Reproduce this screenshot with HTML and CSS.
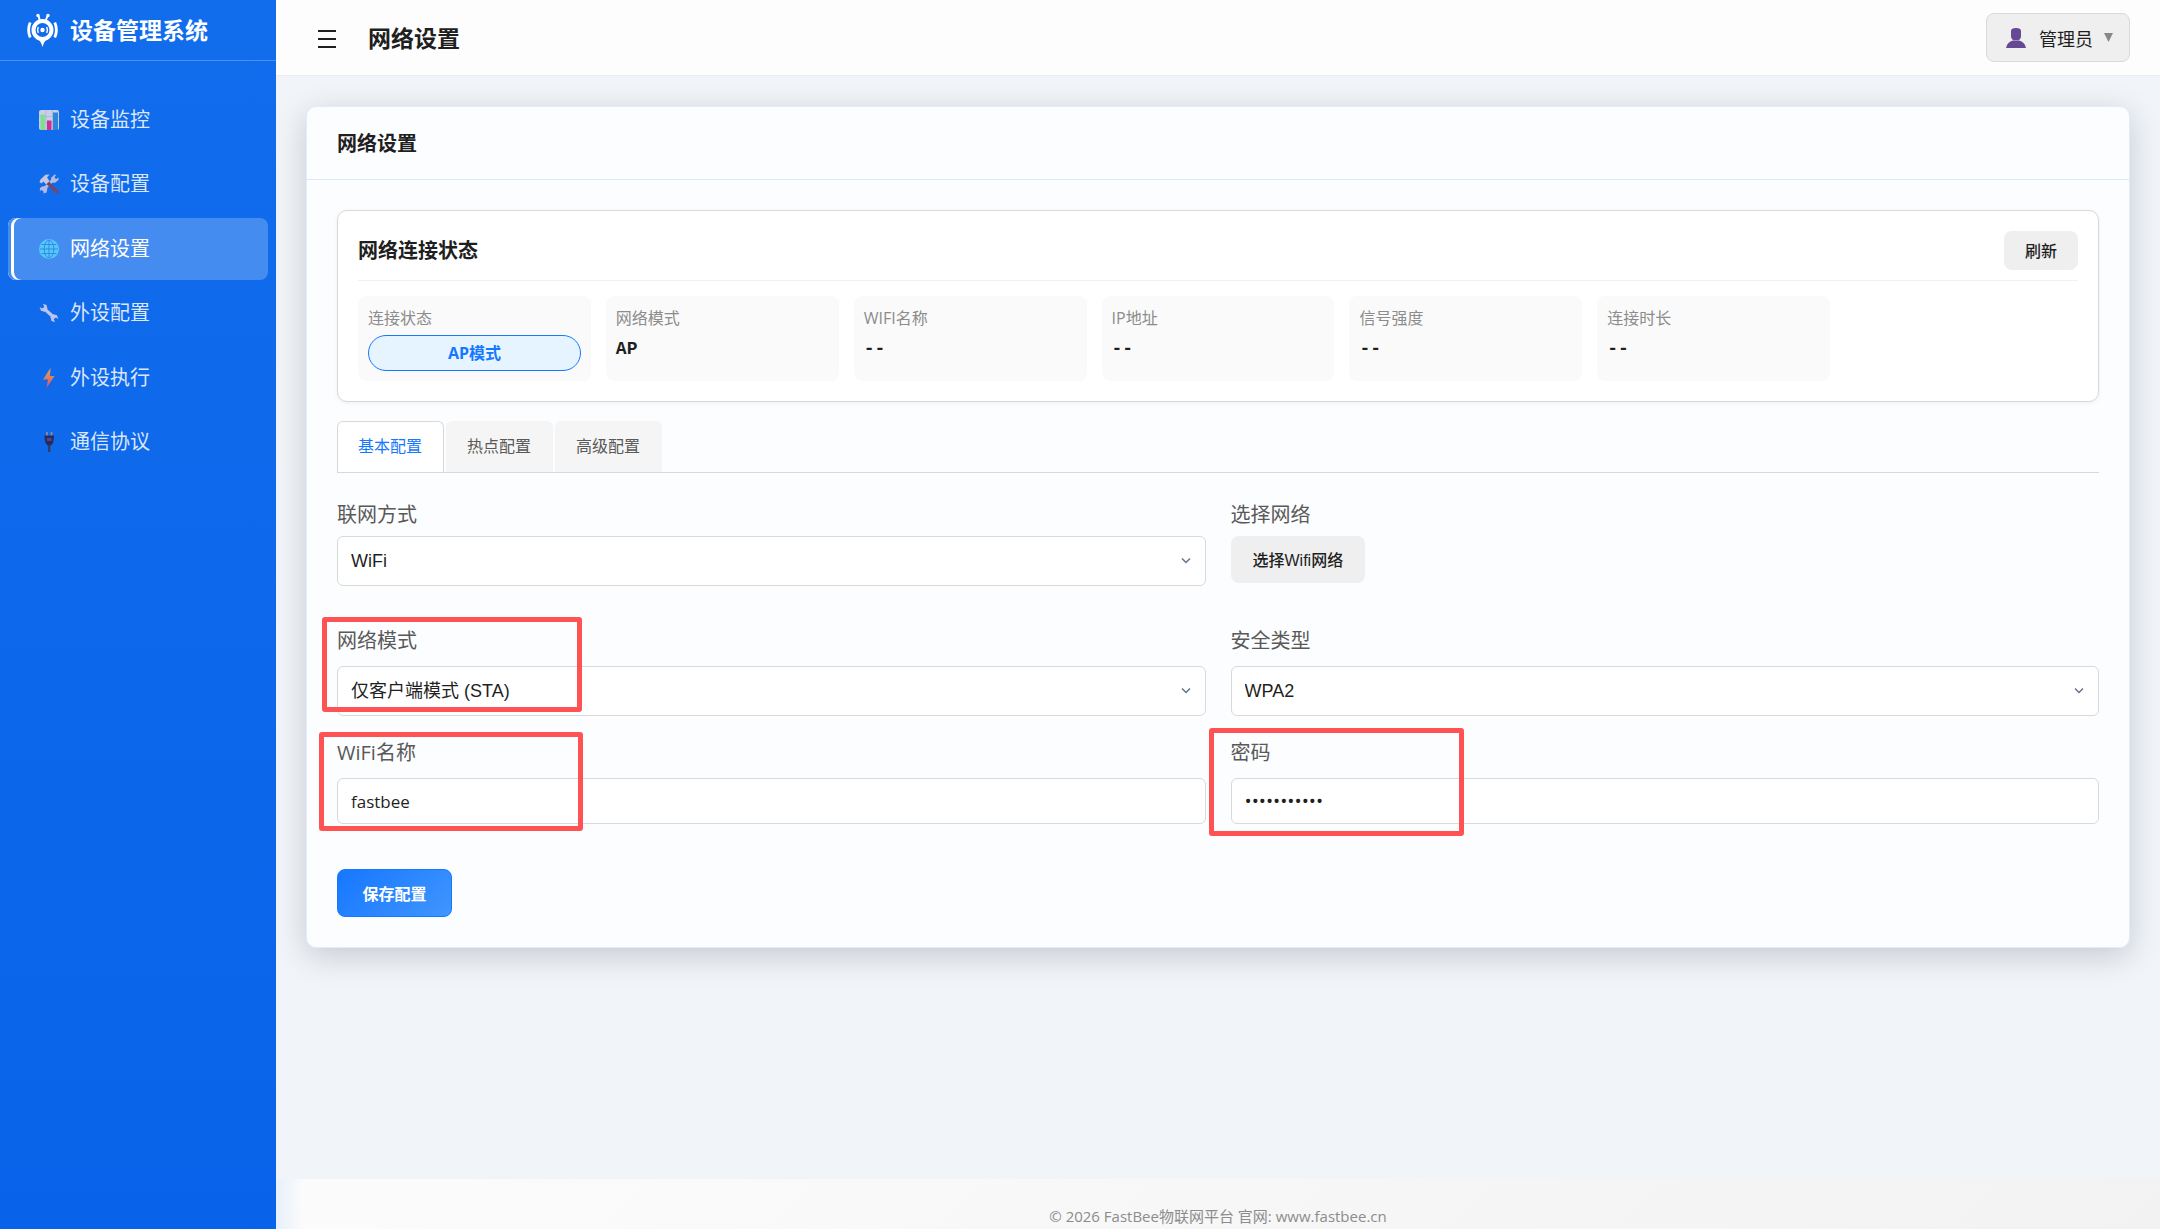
FILE: index.html
```html
<!DOCTYPE html>
<html lang="zh-CN">
<head>
<meta charset="utf-8">
<title>设备管理系统</title>
<link rel="stylesheet" href="styles.css">
</head>
<body>
<aside class="sidebar">
  <div class="brand">
    <svg class="brand-logo" viewBox="0 0 32 34" fill="none" stroke="#fff" stroke-width="2">
      <path d="M13 8L11.500 3M18.500 8L20.500 3"/>
      <circle cx="11" cy="2.500" r="1.700" fill="#fff" stroke="none"/>
      <circle cx="21" cy="2.500" r="1.700" fill="#fff" stroke="none"/>
      <path d="M9 24Q14 28 15.500 34Q17 28 22 24Z" fill="#fff" stroke="none"/>
      <circle cx="15.500" cy="17" r="9" stroke-width="4"/>
      <circle cx="15.500" cy="17" r="2.200" fill="#fff" stroke="none"/>
      <path d="M11.300 14q-1.500 3 0 6M19.700 14q1.500 3 0 6" stroke-width="1.500"/>
      <path d="M3.200 9.500q-3.200 7.500 0 15M27.800 9.500q3.200 7.500 0 15" stroke-width="2.800"/>
    </svg>
    <span class="brand-name">设备管理系统</span>
  </div>
  <nav class="menu">
    <a class="menu-item" href="#monitor">
      <svg class="menu-icon" viewBox="0 0 20 20"><rect width="20" height="20" rx="2" fill="#c9cfe8"/><path d="M0 6.500h20M0 13h20M7 0v20M13.500 0v20" stroke="#9aa9d2" stroke-width=".6"/><rect x="1.500" y="4.500" width="4.500" height="15.500" fill="#7de08c"/><rect x="8" y="10.500" width="4.500" height="9.500" fill="#cf3090"/><rect x="14" y="2.500" width="5" height="17.500" fill="#2f84dc"/></svg>
      <span>设备监控</span>
    </a>
    <a class="menu-item" href="#device">
      <svg class="menu-icon" viewBox="0 0 20 20"><path d="M3.500 16.500L14 6" stroke="#b3bbe2" stroke-width="3"/><path d="M12.500 8.500L12 4 15.500.5 17 1 15.500 3.500 17 5 19.500 3.500 19.500 6 16 8.800z" fill="#b3bbe2"/><path d="M6.500 12L8.500 14 7.500 18.500 4.500 19.500 4.500 17 2.500 16 .8 17 1 14 3 12.500z" fill="#b3bbe2"/><path d="M9 9l9 9" stroke="#73496b" stroke-width="3.600" stroke-linecap="round"/><path d="M.5 8L1.500 5.500 6.500.8 10.500.5 8 3.500 10.500 7 7 10.500 4.500 7.500 2.500 9.500z" fill="#c3c7e4"/></svg>
      <span>设备配置</span>
    </a>
    <a class="menu-item menu-item-active" href="#network" aria-current="page">
      <svg class="menu-icon" viewBox="0 0 20 20"><circle cx="10" cy="10" r="10" fill="#55c8fb"/><g fill="none" stroke="#2f86e0" stroke-width=".9"><ellipse cx="10" cy="10" rx="4.800" ry="9"/><path d="M10 1v18M1 10h18M2.500 5.500h15M2.500 14.500h15"/></g></svg>
      <span>网络设置</span>
    </a>
    <a class="menu-item" href="#peripheral">
      <svg class="menu-icon" viewBox="0 0 20 20"><path d="M5 5.500L15 14.500" stroke="#bfc4ec" stroke-width="3.200"/><path d="M4 .8L7.500 2 8.500 6 5.500 8.800 2 7.800.6 4 3 5.500 5.300 4z" fill="#bfc4ec"/><path d="M16 19L12.500 18 11.500 14 14.500 11.200 18 12.300 19.400 16 17 14.500 14.700 16z" fill="#bfc4ec"/></svg>
      <span>外设配置</span>
    </a>
    <a class="menu-item" href="#execute">
      <svg class="menu-icon" viewBox="0 0 20 20"><defs><linearGradient id="bolt" x2="0" y2="1"><stop stop-color="#dba75a"/><stop offset="1" stop-color="#e4506a"/></linearGradient></defs><path d="M11.500 0L4 11.500h5L7.500 20 15.500 8H11z" fill="url(#bolt)"/></svg>
      <span>外设执行</span>
    </a>
    <a class="menu-item" href="#protocol">
      <svg class="menu-icon" viewBox="0 0 20 20"><path d="M8 0v4M12.500 0v4" stroke="#8d86a0" stroke-width="1.800"/><path d="M5.500 3.500h9.500v2.500l-1 5-2 2.500h-3.500l-2-2.500-1-5z" fill="#2b2c55"/><rect x="8" y="6" width="4.500" height="3" fill="#4a45a0"/><path d="M10.200 13v7" stroke="#333a66" stroke-width="2.400"/></svg>
      <span>通信协议</span>
    </a>
  </nav>
</aside>
<div class="main">
  <header class="topbar">
    <button class="menu-toggle" type="button" aria-label="菜单"><svg width="18" height="18" viewBox="0 0 18 18" stroke="#1f1f1f" stroke-width="2"><path d="M0 1h18M0 9h18M0 17h18"/></svg></button>
    <h1 class="page-title">网络设置</h1>
    <button class="user-button" type="button">
      <svg class="user-icon" viewBox="0 0 20 20" fill="#654994"><path d="M5 3q0-3 5-3t5 3v5q0 3-3 4.500H8Q5 11 5 8z"/><path d="M0 20q1-6 7-7.500l3 .5 3-.5q6 1.500 7 7.500z"/></svg>
      <span>管理员</span>
      <svg class="user-caret" viewBox="0 0 10 10"><path d="M0 0h10L5 10z" fill="#888"/></svg>
    </button>
  </header>
  <main class="content">
    <section class="card">
      <h2 class="card-header">网络设置</h2>
      <div class="card-body">
        <section class="status">
          <div class="status-header">
            <h3 class="status-title">网络连接状态</h3>
            <button class="plain-button refresh" type="button">刷新</button>
          </div>
          <dl class="status-grid">
            <div class="status-item"><dt>连接状态</dt><dd class="badge">AP模式</dd></div>
            <div class="status-item"><dt>网络模式</dt><dd>AP</dd></div>
            <div class="status-item"><dt>WIFI名称</dt><dd>--</dd></div>
            <div class="status-item"><dt>IP地址</dt><dd>--</dd></div>
            <div class="status-item"><dt>信号强度</dt><dd>--</dd></div>
            <div class="status-item"><dt>连接时长</dt><dd>--</dd></div>
          </dl>
        </section>
        <div class="tabs" role="tablist">
          <button class="tab tab-active" type="button" role="tab" aria-selected="true">基本配置</button>
          <button class="tab" type="button" role="tab">热点配置</button>
          <button class="tab" type="button" role="tab">高级配置</button>
        </div>
        <form class="form">
          <div class="form-row form-row-first">
            <div class="field">
              <label for="link">联网方式</label>
              <select id="link" class="control select"><option>WiFi</option></select>
            </div>
            <div class="field">
              <label for="pick">选择网络</label>
              <button id="pick" class="plain-button pick" type="button">选择Wifi网络</button>
            </div>
          </div>
          <div class="form-row">
            <div class="field">
              <label for="mode">网络模式</label>
              <select id="mode" class="control select"><option>仅客户端模式 (STA)</option></select>
              <span class="mark mark-mode"></span>
            </div>
            <div class="field">
              <label for="security">安全类型</label>
              <select id="security" class="control select"><option>WPA2</option></select>
            </div>
          </div>
          <div class="form-row">
            <div class="field">
              <label for="ssid">WiFi名称</label>
              <input id="ssid" class="control input" type="text" value="fastbee">
              <span class="mark mark-ssid"></span>
            </div>
            <div class="field">
              <label for="password">密码</label>
              <input id="password" class="control input input-password" type="password" value="fastbee2026">
              <span class="mark mark-password"></span>
            </div>
          </div>
          <button class="save" type="button">保存配置</button>
        </form>
      </div>
    </section>
  </main>
  <footer class="footer">© 2026 FastBee物联网平台 官网: www.fastbee.cn</footer>
</div>
</body>
</html>
```
FILE: styles.css
```css
* { box-sizing: border-box; }

body {
  margin: 0;
  min-height: 100vh;
  display: flex;
  font-family: "Open Sans", "Noto Sans CJK SC", sans-serif;
  font-size: 16px;
  color: #1f1f1f;
  background: #f1f5fa;
}

h1, h2, h3, dl, dd { margin: 0; }
button, input, select { font: inherit; color: inherit; margin: 0; }

/* Sidebar */
.sidebar {
  flex: none;
  width: 276px;
  background: linear-gradient(180deg, #116dec, #0963ea);
  color: #fff;
}
.brand {
  display: flex;
  align-items: center;
  gap: 11px;
  height: 61px;
  padding: 0 27px;
  border-bottom: 1px solid rgba(255, 255, 255, .25);
}
.brand-logo { width: 32px; height: 34px; }
.brand-name { font-size: 23px; font-weight: 700; line-height: 32px; }
.menu {
  display: flex;
  flex-direction: column;
  justify-content: space-between;
  height: 442px;
  padding: 28px 8px 30px;
}
.menu-item {
  display: flex;
  align-items: center;
  gap: 11px;
  height: 62px;
  padding-left: 31px;
  border-radius: 8px;
  font-size: 20px;
  line-height: 30px;
  color: rgba(255, 255, 255, .85);
  text-decoration: none;
}
.menu-icon { width: 20px; height: 20px; }
.menu-item-active {
  color: #fff;
  background: #448cef;
  box-shadow: inset 3px 0 #448cef, inset 6px 0 #fff;
}

/* Top bar */
.main {
  flex: 1;
  min-width: 0;
  display: flex;
  flex-direction: column;
}
.topbar {
  display: flex;
  align-items: center;
  height: 76px;
  padding: 0 30px 0 42px;
  background: #fdfdfe;
  border-bottom: 1px solid #ececee;
}
.menu-toggle {
  display: flex;
  padding: 2px 0 0;
  border: 0;
  background: none;
}
.page-title {
  flex: 1;
  margin-left: 32px;
  font-size: 23px;
  line-height: 32px;
  font-weight: 700;
}
.user-button {
  display: flex;
  align-items: center;
  height: 49px;
  padding: 0 16px 0 19px;
  border: 1px solid #d9d9d9;
  border-radius: 8px;
  background: #efefef;
  font-size: 18px;
}
.user-icon { width: 20px; height: 20px; margin-right: 13px; }
.user-caret { width: 9px; height: 9px; margin-left: 11px; }

/* Card */
.content { flex: 1; padding: 30px; }
.card {
  border: 1px solid #e0ebfb;
  border-radius: 10px;
  background: #fcfdff;
  box-shadow: 0 8px 32px rgba(0, 0, 0, .18);
}
.card-header {
  padding: 22px 30px 20px;
  font-size: 20px;
  line-height: 30px;
  border-bottom: 1px solid #dce9fd;
}
.card-body { padding: 30px; }

/* Connection status */
.status {
  padding: 20px;
  border: 1px solid #d9d9d9;
  border-radius: 10px;
  background: #fff;
  box-shadow: 0 1px 4px rgba(0, 0, 0, .06);
}
.status-header {
  display: flex;
  align-items: center;
  justify-content: space-between;
  padding-bottom: 10px;
  border-bottom: 1px solid #f0f0f0;
}
.status-title { font-size: 20px; line-height: 30px; }
.plain-button {
  padding: 0 22px 2px;
  border: 0;
  border-radius: 8px;
  background: #efefef;
  font-family: "Liberation Sans", "Noto Sans CJK SC", sans-serif;
  font-weight: 500;
}
.refresh { height: 39px; padding: 0 21px 2px; }
.status-grid {
  display: grid;
  grid-template-columns: repeat(7, 1fr);
  gap: 15px;
  margin-top: 15px;
}
.status-item {
  height: 85px;
  padding: 10px;
  border-radius: 8px;
  background: #fafafa;
}
.status-item dt { line-height: 24px; color: #8c8c8c; margin-bottom: 5px; }
.status-item dd {
  font-family: "Courier New", "Liberation Mono", monospace;
  font-size: 18px;
  font-weight: 700;
  line-height: 28px;
}
.status-item .badge {
  font-family: inherit;
  font-size: 16px;
  line-height: 34px;
  text-align: center;
  color: #1677ff;
  background: #e6f4ff;
  border: 1px solid #1677ff;
  border-radius: 18px;
}

/* Tabs */
.tabs {
  display: flex;
  gap: 2px;
  margin-top: 19px;
  border-bottom: 1px solid #d9d9d9;
}
.tab {
  height: 51px;
  padding: 0 21px 4px 20px;
  border: 1px solid transparent;
  border-bottom: 0;
  border-radius: 6px 6px 0 0;
  background: #f5f5f5;
  color: #595959;
}
.tab-active { background: #fff; border-color: #d9d9d9; color: #1677ff; }

/* Form */
.form { padding-top: 27px; }
.form-row {
  display: grid;
  grid-template-columns: 1fr 1fr;
  gap: 25px;
  margin-bottom: 22px;
}
.form-row-first { margin-bottom: 40px; }
.field {
  position: relative;
  display: flex;
  flex-direction: column;
  align-items: flex-start;
  gap: 10px;
}
.form-row-first .field { gap: 6px; }
.field label { font-size: 20px; line-height: 30px; color: #595959; }
.control {
  width: 100%;
  padding: 0 13px;
  border: 1px solid #d9d9d9;
  border-radius: 6px;
  background: #fff;
  font-size: 18px;
}
.select {
  height: 50px;
  appearance: none;
  font-family: "Liberation Sans", "Noto Sans CJK SC", sans-serif;
  background: #fff url("data:image/svg+xml,%3Csvg xmlns='http://www.w3.org/2000/svg' width='10' height='8' fill='none' stroke='%2364748b' stroke-width='1.500'%3E%3Cpath d='M1 1.500l4 4 4-4'/%3E%3C/svg%3E") no-repeat right 14px center;
}
.input { height: 46px; font-size: 17px; }
.input-password { font-size: 19px; }
.pick { height: 47px; }
.save {
  display: block;
  width: 115px;
  height: 48px;
  margin-top: 45px;
  padding: 0;
  border: 1px solid #1677ff;
  border-radius: 8px;
  background: linear-gradient(135deg, #1677ff, #4096ff);
  color: #fff;
  font-weight: 700;
}

/* Highlight frames laid over the fields to fill in */
.mark {
  position: absolute;
  border: 5px solid #ff5252;
  border-radius: 3px;
  pointer-events: none;
}
.mark-mode { left: -15px; top: -9px; width: 260px; height: 95px; }
.mark-ssid { left: -18px; top: -6px; width: 264px; height: 99px; }
.mark-password { left: -22px; top: -10px; width: 255px; height: 108px; }

.footer {
  height: 50px;
  padding-top: 25px;
  font-size: 15px;
  line-height: 24px;
  text-align: center;
  color: #8c8c8c;
  background:
    linear-gradient(90deg, #e8f0fa, rgba(250, 250, 250, 0) 28px),
    linear-gradient(135deg, #fcfcfc, #f2f2f2);
}
```
